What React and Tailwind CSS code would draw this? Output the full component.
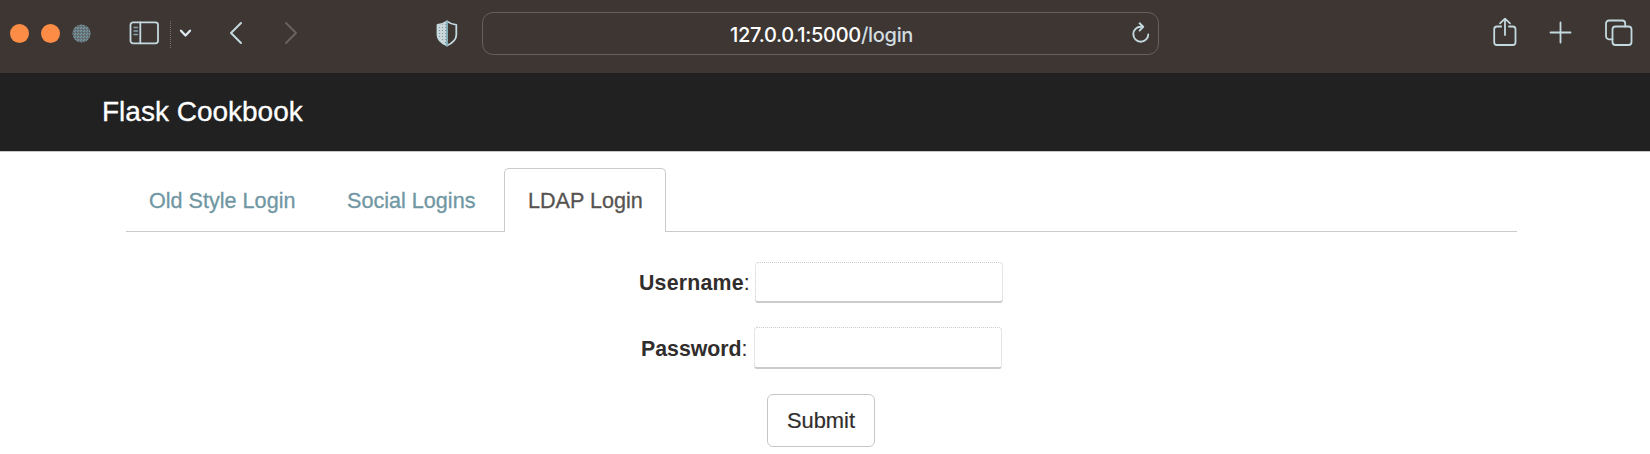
const icon = {
  fill: 'none',
  stroke: '#c3d9df',
  strokeWidth: 1.8,
  strokeLinecap: 'round',
  strokeLinejoin: 'round',
};

function Toolbar() {
  return (
    <header className="flex h-[73px] items-start bg-[#3d3633]">
      <div className="ml-[10px] mt-[24px] flex">
        <span className="size-[19px] rounded-full bg-[#fd8d46]" />
        <span className="ml-[12px] size-[19px] rounded-full bg-[#fd8d46]" />
        <svg className="ml-[12px] size-[19px]" viewBox="0 0 19 19">
          <defs>
            <pattern id="grain" width="3" height="3" patternUnits="userSpaceOnUse">
              <rect width="3" height="3" fill="#66767a" />
              <path d="M0 0h1v1H0zM2 1h1v1H2z" fill="#759aa8" />
              <path d="M1 2h1v1H1z" fill="#5f5b57" />
            </pattern>
          </defs>
          <circle cx="9.5" cy="9.5" r="9.1" fill="url(#grain)" />
        </svg>
      </div>
      <svg className="ml-[37px] mt-[20px] h-[26px] w-[32px]" viewBox="0 0 32 26" {...icon}>
        <rect x="2.5" y="2.3" width="27.5" height="21" rx="2.5" />
        <path d="M12.3 2.3v21" />
        <path d="M6 7.5h3.5M6 11h3.5M6 14.5h3.5" stroke="#86a6b1" strokeWidth="1.4" />
      </svg>
      <div className="ml-[10px] mt-[21px] h-[27px] w-px border-l border-dotted border-[#77706d]" />
      <svg className="ml-[8px] mt-[28px] h-[10px] w-[13px]" viewBox="0 0 13 10" {...icon} stroke="#dce9ed" strokeWidth="2.3">
        <path d="M2 2.7 6.5 7.5 11 2.7" />
      </svg>
      <svg className="ml-[37px] mt-[21px] h-[24px] w-[14px]" viewBox="0 0 14 24" {...icon} strokeWidth="2">
        <path d="M12 2 2 12l10 10" />
      </svg>
      <svg className="ml-[41px] mt-[21px] h-[24px] w-[14px]" viewBox="0 0 14 24" {...icon} stroke="#69625f" strokeWidth="2">
        <path d="m2 2 10 10L2 22" />
      </svg>
      <svg className="ml-[137px] mt-[20px] h-[27px] w-[24px]" viewBox="0 0 24 27" {...icon}>
        <defs>
          <pattern id="mesh" width="3" height="3" patternUnits="userSpaceOnUse">
            <rect width="3" height="3" fill="#ccd5d8" stroke="none" />
            <path d="M1 1h1v1H1z" fill="#739aa8" stroke="none" />
          </pattern>
        </defs>
        <path d="M12 1.4C9.5 3.3 6.5 4.3 2.5 4.8V15c0 4.6 4.1 8.1 9.5 10.5z" fill="url(#mesh)" />
        <path d="M12 1.4c2.5 1.9 5.5 2.9 9.3 3.4V15c0 4.6-3.9 8.1-9.3 10.5" />
        <path d="M12 2v23" stroke="#7fa8b5" />
      </svg>
      <div className="ml-[23px] mt-[12px] flex h-[43px] w-[677px] items-center rounded-[11px] border border-[#66605d]">
        <span className="ml-[247px] mt-[2px] w-[185px] whitespace-nowrap font-['Inter',sans-serif] text-[20px] font-medium leading-[24px] tracking-[-0.015em] text-white">
          127.0.0.1:5000<span className="text-[#d2dde0]">/login</span>
        </span>
        <svg className="-mt-[1px] ml-[216px] h-[22px] w-[20px]" viewBox="0 0 20 22" {...icon} strokeWidth="1.9">
          <path d="M11.5 4.7H9.8A7.5 7.5 0 1 0 17.3 12.500" />
          <path d="m8.6 1.3 3.6 3.500-3.6 3.800" />
        </svg>
      </div>
      <svg className="ml-[333px] mt-[17px] h-[30px] w-[26px]" viewBox="0 0 26 30" {...icon}>
        <path d="M9.2 9.5H5A2.8 2.8 0 0 0 2.2 12.3v12.9A2.8 2.8 0 0 0 5 28h15.700a2.8 2.8 0 0 0 2.8-2.8V12.300A2.8 2.8 0 0 0 20.700 9.500H17" />
        <path d="M13 18V2M8 6.300 13 1.600l5 4.700" />
      </svg>
      <svg className="ml-[31px] mt-[21px] size-[23px]" viewBox="0 0 23 23" {...icon}>
        <path d="M11.5 1.5v20M1.5 11.5h20" />
      </svg>
      <svg className="ml-[32px] mt-[18px] h-[29px] w-[29px]" viewBox="0 0 29 29" {...icon}>
        <rect x="8.5" y="8.5" width="19" height="18.5" rx="3" />
        <path d="M8.5 21.3H5a3 3 0 0 1-3-3V5.5a3 3 0 0 1 3-3h13.2a3 3 0 0 1 3 3v3" />
      </svg>
    </header>
  );
}

function Field({ label, type, row, text, box }) {
  return (
    <label className={`flex items-center ${row}`}>
      <span className={`whitespace-nowrap text-[21.3px] font-bold leading-[24px] text-[#302d2c] ${text}`}>
        {label}<span className="font-normal">:</span>
      </span>
      <input
        type={type}
        className={`rounded-[3px] border border-dotted border-[#c9cbcd] px-3 outline-none ${box}`}
      />
    </label>
  );
}

export default function App() {
  return (
    <div className="h-[454px] overflow-hidden bg-white font-['Liberation_Sans',sans-serif]">
      <Toolbar />
      <nav className="flex h-[79px] items-center border-b border-[#c8c8c8] bg-[#212121] pl-[102px]">
        <span className="text-[28px] leading-[32px] text-white [-webkit-text-stroke:0.3px_#fff]">Flask Cookbook</span>
      </nav>
      <main>
        <div className="ml-[126px] mt-[16px] flex h-[64px] w-[1391px] text-[21.6px] leading-[24px] [-webkit-text-stroke-width:0.3px]">
          <a className="w-[200px] whitespace-nowrap border-b border-[#cbcbcb] pl-[23px] pt-[21px] text-[#7097a3]">Old Style Login</a>
          <a className="w-[178px] whitespace-nowrap border-b border-[#cbcbcb] pl-[21px] pt-[21px] text-[#7097a3]">Social Logins</a>
          <a className="w-[162px] whitespace-nowrap rounded-t-[5px] border border-b-0 border-[#cbcbcb] pl-[23px] pt-[20px] text-[#565351]">LDAP Login</a>
          <div className="flex-1 border-b border-[#cbcbcb]" />
        </div>
        <form>
          <Field label="Username" type="text" row="ml-[639px] mt-[30px] h-[41px]" text="w-[116px] tracking-[0.01em]" box="h-[41px] w-[248px] border-b-2 [border-bottom-style:solid]" />
          <Field label="Password" type="password" row="ml-[641px] mt-[24px] h-[42px]" text="w-[113px] pt-[1px]" box="h-[42px] w-[248px] border-b-2 [border-bottom-style:solid]" />
          <button
            type="button"
            className="ml-[767px] mt-[25px] block h-[53px] w-[108px] rounded-[6px] border border-[#c4c7ca] text-[21.9px] leading-[24px] text-[#302d2c] [-webkit-text-stroke-width:0.2px]"
          >
            Submit
          </button>
        </form>
      </main>
    </div>
  );
}
